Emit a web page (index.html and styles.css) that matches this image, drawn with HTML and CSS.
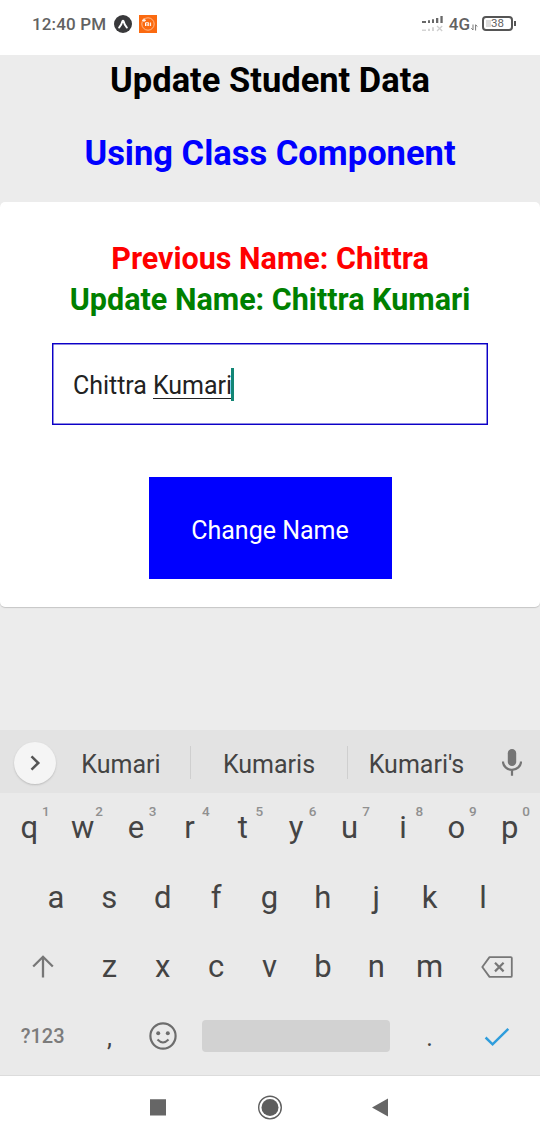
FILE: index.html
```html
<!DOCTYPE html>
<html lang="en">
<head>
<meta charset="utf-8">
<title>Update Student Data</title>
<link rel="stylesheet" href="styles.css">
</head>
<body>
<div class="phone">
  <header class="status">
    <span class="clock">12:40 PM</span>
    <svg class="app-icon" width="18" height="18" viewBox="0 0 18 18"><circle cx="9" cy="9" r="9" fill="#39393b"/><path d="M5.100 12.600Q7.700 9.500 8.400 6.200q.600-1 1.200 0 .700 3.300 3.300 6.400" fill="none" stroke="#fff" stroke-width="1.900" stroke-linecap="round"/></svg>
    <svg class="mi-icon" width="18" height="18" viewBox="0 0 18 18"><path fill="#fb6a10" d="M0 0h18v18H0z"/><circle cx="9" cy="9" r="6.200" fill="none" stroke="#ffc197" stroke-width=".9"/><path d="M6.500 11V7.800h3.200V11M8.100 8.800V11M11.600 7.500V11" fill="none" stroke="#fff" stroke-width="1"/><path d="M3 5.200h4M5 3.400v3.600" stroke="#fff" stroke-width="1.100"/></svg>
    <svg class="signal" width="22" height="17" viewBox="0 0 22 17"><path d="M0 5h4v2H0zM6 4.300h2V7H6zM10 3.200h2V7h-2zM14 2h2.300v5H14zM18.400 0h2.300v7h-2.300z" fill="#686868"/><path d="M0 13.500h4V15H0zM6 12.700h2V15H6zM10 11.300h2V15h-2z" fill="#d4d4d4"/><path d="m15 10 5.200 5M20.200 10 15 15" stroke="#cfcfcf" stroke-width="1.300"/></svg>
    <span class="network">4G</span>
    <svg class="arrows" width="7" height="7" viewBox="0 0 7 7"><path d="M2 .5v5.500L.3 4.300M4.600 6.500V.8l1.800 1.700" fill="none" stroke="#777"/></svg>
    <span class="battery"><span class="level"></span><span class="percent">38</span></span><span class="nub"></span>
  </header>

  <main class="app">
    <h1 class="title">Update Student Data</h1>
    <h2 class="subtitle">Using Class Component</h2>
    <section class="card">
      <p class="name previous">Previous Name: Chittra</p>
      <p class="name updated">Update Name: Chittra Kumari</p>
      <div class="field"><span class="value">Chittra <span class="composing">Kumari</span></span><span class="caret"></span></div>
      <div class="button">Change Name</div>
    </section>
  </main>

  <section class="keyboard">
    <div class="suggestions">
      <span class="expand"><svg width="12" height="18" viewBox="0 0 12 18"><path d="m2.500 2.300 6.800 6.700-6.800 6.700" fill="none" stroke="#555" stroke-width="2.500"/></svg></span>
      <span class="word first">Kumari</span>
      <span class="word">Kumaris</span>
      <span class="word last">Kumari's</span>
      <svg class="mic" width="20" height="28" viewBox="0 0 20 28"><rect x="5.800" y="0" width="8.400" height="17" rx="4.200" fill="#757575"/><path d="M1 12.500a9 8.300 0 0 0 18 0M10 20.800v6" fill="none" stroke="#757575" stroke-width="2.200"/></svg>
    </div>
    <div class="row top">
      <span class="key">q<sup>1</sup></span><span class="key">w<sup>2</sup></span><span class="key">e<sup>3</sup></span><span class="key">r<sup>4</sup></span><span class="key">t<sup>5</sup></span><span class="key">y<sup>6</sup></span><span class="key">u<sup>7</sup></span><span class="key">i<sup>8</sup></span><span class="key">o<sup>9</sup></span><span class="key">p<sup>0</sup></span>
    </div>
    <div class="row home">
      <span class="key">a</span><span class="key">s</span><span class="key">d</span><span class="key">f</span><span class="key">g</span><span class="key">h</span><span class="key">j</span><span class="key">k</span><span class="key">l</span>
    </div>
    <div class="row">
      <span class="key wide"><svg width="22" height="23" viewBox="0 0 22 23"><path d="M11 22.500V1.800M1.200 11.500 11 1.800l9.800 9.700" fill="none" stroke="#777" stroke-width="2.300"/></svg></span><span class="key">z</span><span class="key">x</span><span class="key">c</span><span class="key">v</span><span class="key">b</span><span class="key">n</span><span class="key">m</span><span class="key wide action"><svg width="32" height="22" viewBox="0 0 32 22"><path d="M8.500 1.100h21.300q1 0 1 1v17.800q0 1-1 1H8.500L1.300 11z" fill="none" stroke="#777" stroke-width="1.800" stroke-linejoin="round"/><path d="m14 6.800 8.600 8.600m0-8.600L14 15.400" stroke="#777" stroke-width="2.200"/></svg></span>
    </div>
    <div class="row">
      <span class="key wide symbols">?123</span><span class="key comma">,</span><span class="key emoji"><svg width="28" height="28" viewBox="0 0 28 28"><circle cx="14" cy="14" r="12.600" fill="none" stroke="#6d6d6d" stroke-width="2.200"/><circle cx="9.200" cy="11.300" r="2" fill="#6d6d6d"/><circle cx="18.800" cy="11.300" r="2" fill="#6d6d6d"/><path d="M8.500 17.500q5.500 5.800 11 0" fill="none" stroke="#6d6d6d" stroke-width="2"/></svg></span><span class="space"></span><span class="key period">.</span><span class="key wide action"><svg width="26" height="20" viewBox="0 0 26 20"><path d="m1.600 10.500 7 6.800L24.300 1.800" fill="none" stroke="#2f9ddc" stroke-width="2.500"/></svg></span>
    </div>
  </section>

  <nav class="navbar">
    <svg width="540" height="64" viewBox="0 0 540 64"><path d="M150 23.300h16v16.200h-16zM372 31.600l16-9v18z" fill="#666"/><circle cx="270" cy="31.600" r="11.300" fill="none" stroke="#5e5e5e" stroke-width="1.400"/><circle cx="270" cy="31.600" r="8.500" fill="#5e5e5e"/></svg>
  </nav>
</div>
</body>
</html>
```
FILE: styles.css
```css
* { box-sizing: border-box; }
body { margin: 0; font-family: Roboto, "Noto Sans", sans-serif; }
h1, h2, p { margin: 0; }
svg { display: block; flex: none; }
.phone { width: 540px; height: 1140px; display: flex; flex-direction: column; background: #fff; overflow: hidden; }

.status { height: 55px; flex: none; display: flex; align-items: center; padding: 0 24px 8px 32px; color: #626262; }
.clock { font-size: 17px; font-weight: 500; letter-spacing: .15px; width: 82px; white-space: nowrap; }
.mi-icon { margin-left: 7px; }
.signal { margin-left: auto; margin-top: 2px; }
.network { font-size: 17px; font-weight: 500; margin-left: 5px; }
.arrows { margin: 8px 4px 0 1px; }
.battery { position: relative; width: 31px; height: 15px; border: 2px solid #555; border-radius: 4px; display: flex; align-items: center; justify-content: center; }
.level { position: absolute; left: 2px; top: 2px; width: 5px; height: 7px; background: #ddd; }
.percent { position: relative; font-size: 11.500px; line-height: 11px; }
.nub { width: 2px; height: 5px; background: #555; margin-left: 1px; }

.app { height: 675px; flex: none; background: #ececec; text-align: center; }
.title, .subtitle { font-weight: 700; font-size: 34.500px; line-height: 40px; white-space: nowrap; }
.title { padding-top: 5px; color: #000; }
.subtitle { padding-top: 33px; color: #00f; }
.card { margin-top: 29px; height: 404.500px; background: #fff; border-radius: 5px; box-shadow: 0 1px 1px #c6c6c6; padding-top: 36px; display: flex; flex-direction: column; align-items: center; }
.name { font-size: 30.500px; font-weight: 700; line-height: 41px; white-space: nowrap; }
.previous { color: #f00; }
.updated { color: #008000; }
.field { width: 436px; height: 82px; margin-top: 23.400px; border: 1px solid #0c00c8; box-shadow: inset 0 0 0 .5px #1a12c4; padding: 3px 0 0 20px; display: flex; align-items: center; font-size: 25px; color: #222; }
.composing { border-bottom: 1px solid #222; display: inline-block; line-height: 24px; }
.value { letter-spacing: -.04px; }
.caret { width: 3px; height: 33px; margin-top: -2px; margin-left: -1px; background: #128675; }
.button { width: 243px; height: 102px; margin-top: 52px; background: #00f; color: #fff; font-size: 25px; display: flex; align-items: center; justify-content: center; padding-top: 5px; }

.keyboard { height: 346px; flex: none; background: #eaeaea; border-bottom: 1px solid #dcdcdc; }
.suggestions { height: 63px; background: #e3e3e3; display: flex; align-items: center; padding: 2px 18px 0 14px; }
.expand { width: 42px; height: 42px; border-radius: 50%; background: #f5f5f5; box-shadow: 0 1px 2px #bbb; display: flex; align-items: center; justify-content: center; }
.word { width: 157px; height: 33px; display: flex; align-items: center; justify-content: center; font-size: 25px; color: #444; border-right: 1px solid #cfcfcf; padding-top: 3px; }
.first { width: 135px; padding-right: 4px; }
.last { width: 138px; border-right: 0; padding-right: 1px; }
.mic { margin-left: auto; }
.row { height: 69.400px; padding: 0 2.600px; display: grid; grid-template-columns: repeat(20, 26.700px); }
.home { padding-left: 29.300px; }
.key { grid-column: span 2; position: relative; display: flex; align-items: center; justify-content: center; font-size: 31px; color: #444; }
.key sup { position: absolute; left: 39.400px; top: 10px; font-size: 13.500px; font-weight: 500; line-height: 16px; color: #909090; }
.wide { grid-column: span 3; }
.action { padding: 2px 0 0 2px; }
.symbols { font-size: 20px; font-weight: 500; color: #7c7c7c; }
.comma, .period { font-size: 25px; padding-top: 3px; }
.space { grid-column: span 8; align-self: center; height: 32px; margin: 0 13px 0 12.500px; background: #d2d2d2; border-radius: 4px; }
.navbar { height: 64px; flex: none; background: #fff; }
```
